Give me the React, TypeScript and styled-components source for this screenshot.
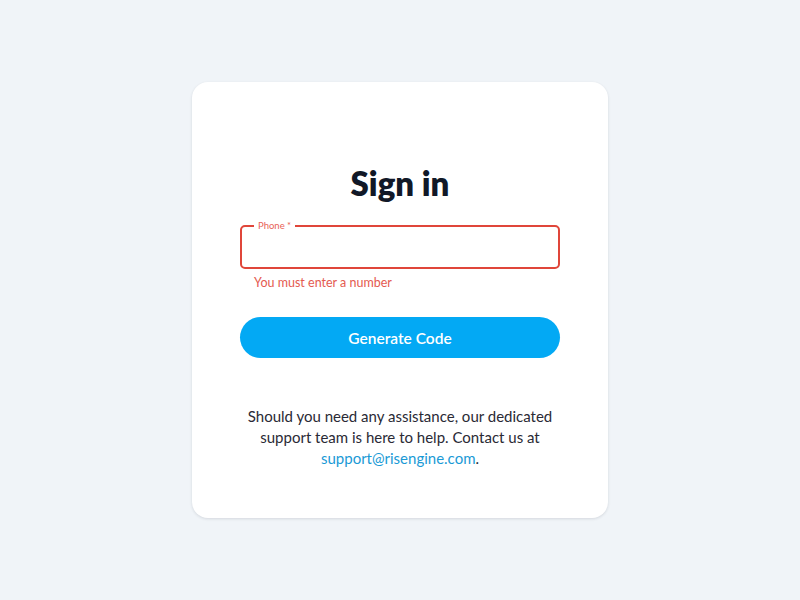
import React from "react";
import styled, { createGlobalStyle } from "styled-components";

const GlobalStyle = createGlobalStyle`
  html, body {
    margin: 0;
    padding: 0;
    background-color: #f0f4f8;
    font-family: "Lato", "Noto Sans", sans-serif;
  }
  * {
    box-sizing: border-box;
  }
`;

const Page = styled.main`
  display: flex;
  justify-content: center;
  min-height: 100vh;
  padding-top: 82px;
`;

const Card = styled.section`
  width: 416px;
  height: 436px;
  padding: 82px 48px 48px;
  background-color: #fff;
  border-radius: 16px;
  box-shadow: 0 1px 3px rgba(15, 23, 42, 0.12);
  display: flex;
  flex-direction: column;
`;

const Title = styled.h1`
  margin: 0 0 19px;
  font-size: 33px;
  line-height: 38px;
  font-weight: 800;
  color: #111827;
  text-align: center;
`;

const Field = styled.fieldset`
  margin: 0;
  padding: 0 12px;
  height: 48px;
  border: 2px solid #e0463a;
  border-radius: 5px;
`;

const Legend = styled.legend`
  padding: 0 4px;
  font-size: 9.5px;
  line-height: 10px;
  color: #e86257;
`;

const Input = styled.input`
  width: 100%;
  height: 32px;
  border: none;
  outline: none;
  background: transparent;
  font: inherit;
`;

const ErrorText = styled.p`
  margin: 6px 0 0 14px;
  font-size: 12.5px;
  line-height: 16px;
  color: #e45a50;
`;

const Button = styled.button`
  margin-top: 26px;
  height: 41px;
  width: 100%;
  border: none;
  border-radius: 21px;
  background-color: #03a9f4;
  color: #fff;
  font-family: inherit;
  font-size: 15.5px;
  font-weight: 600;
  cursor: pointer;
`;

const Help = styled.p`
  margin: 48px 0 0;
  font-size: 15px;
  line-height: 21px;
  color: #2a2a35;
  text-align: center;
`;

const Link = styled.a`
  color: #1a9ad6;
  text-decoration: none;
`;

export default function App() {
  return (
    <>
      <GlobalStyle />
      <Page>
        <Card>
          <Title>Sign in</Title>
          <Field>
            <Legend>Phone *</Legend>
            <Input type="tel" />
          </Field>
          <ErrorText>You must enter a number</ErrorText>
          <Button>Generate Code</Button>
          <Help>
            Should you need any assistance, our dedicated support team is here
            to help. Contact us at{" "}
            <Link href="mailto:support@risengine.com">support@risengine.com</Link>.
          </Help>
        </Card>
      </Page>
    </>
  );
}
